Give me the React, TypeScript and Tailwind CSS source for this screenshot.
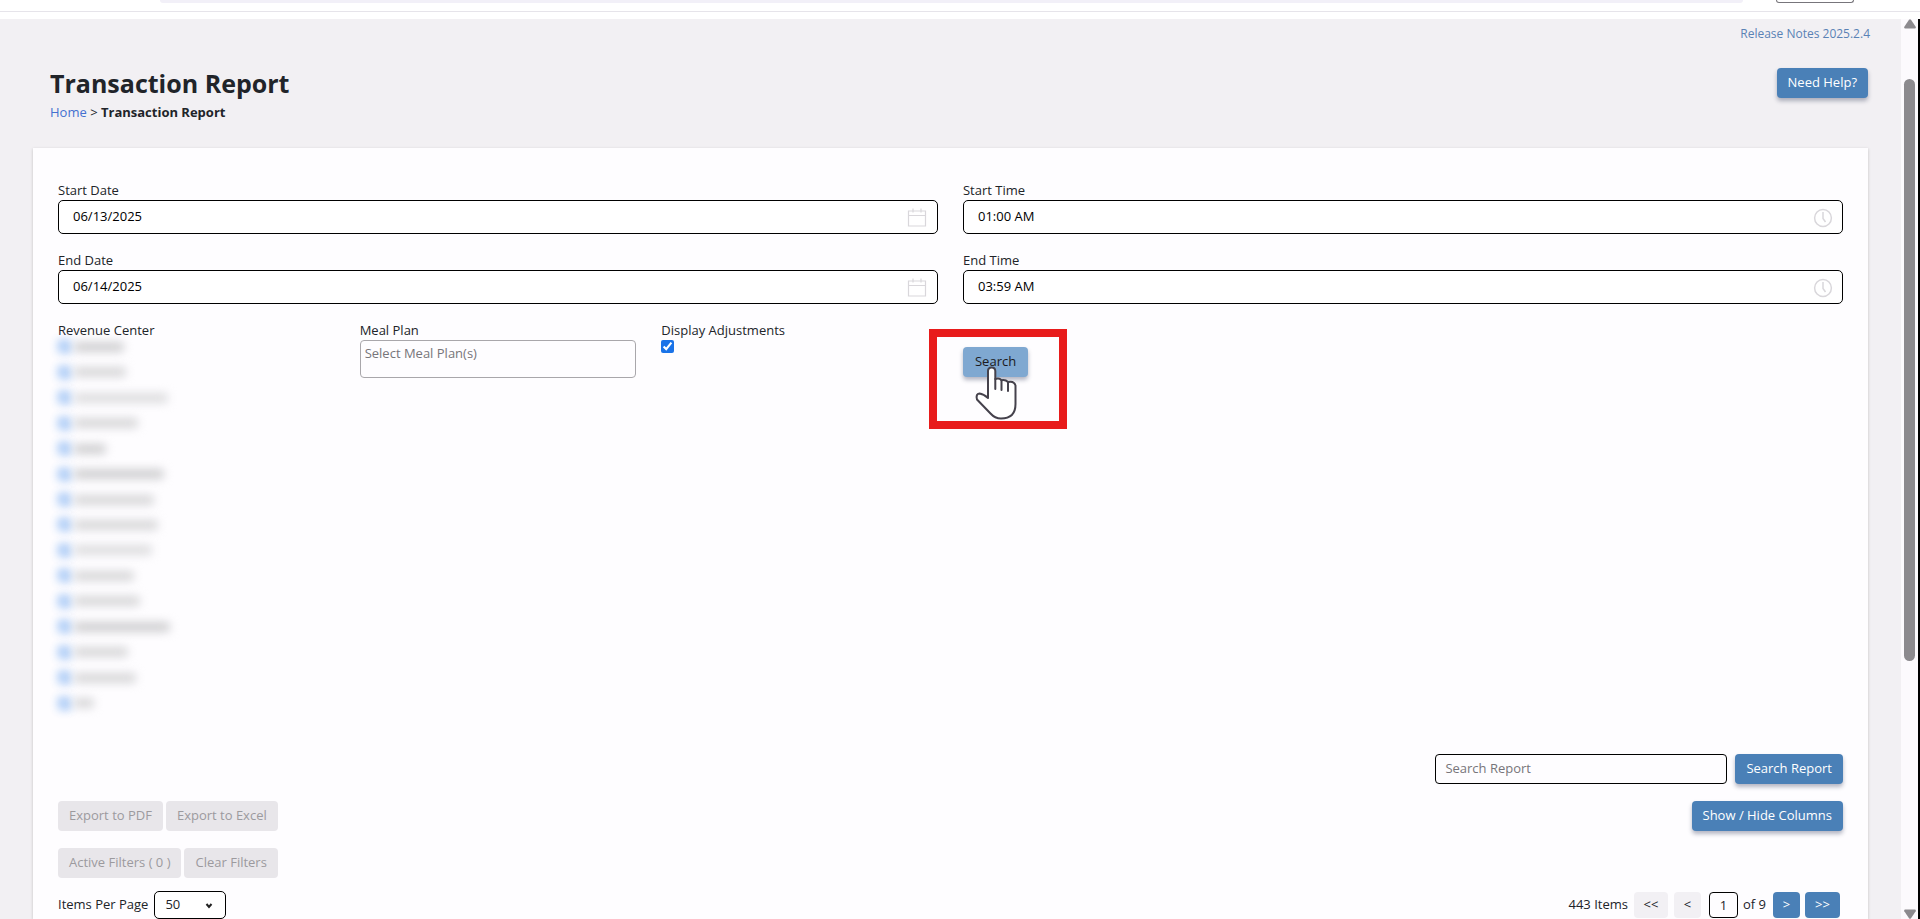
import { useState, type ComponentProps, type ReactNode } from "react";

type RevenueCenter = { id: number; bar: string };

const revenueCenters: RevenueCenter[] = [
  { id: 1, bar: "w-[50px] bg-[#cfcfd1]" },
  { id: 2, bar: "w-[52px] bg-[#d7d7d9]" },
  { id: 3, bar: "w-[94px] bg-[#dddddf]" },
  { id: 4, bar: "w-[64px] bg-[#d7d7d9]" },
  { id: 5, bar: "w-[32px] bg-[#cfcfd1]" },
  { id: 6, bar: "w-[90px] bg-[#cfcfd1]" },
  { id: 7, bar: "w-[80px] bg-[#d7d7d9]" },
  { id: 8, bar: "w-[84px] bg-[#d7d7d9]" },
  { id: 9, bar: "w-[78px] bg-[#dddddf]" },
  { id: 10, bar: "w-[60px] bg-[#d7d7d9]" },
  { id: 11, bar: "w-[66px] bg-[#d7d7d9]" },
  { id: 12, bar: "w-[96px] bg-[#cfcfd1]" },
  { id: 13, bar: "w-[54px] bg-[#d7d7d9]" },
  { id: 14, bar: "w-[62px] bg-[#d7d7d9]" },
  { id: 15, bar: "w-[20px] bg-[#d7d7d9]" },
];

function PrimaryButton({ children }: { children: ReactNode }) {
  return (
    <button className="h-[30px] rounded bg-[#4a80b7] px-[11px] pb-px text-white shadow-[0_3px_4px_rgba(40,50,80,0.35)]">
      {children}
    </button>
  );
}

function DisabledButton({ children }: { children: ReactNode }) {
  return (
    <button
      disabled
      className="h-[30px] rounded bg-[#e8e6ea] px-[11px] pb-px text-[#9c9a9e]"
    >
      {children}
    </button>
  );
}

function Field({
  id,
  label,
  value,
  icon,
}: {
  id: string;
  label: string;
  value: string;
  icon: ReactNode;
}) {
  return (
    <div className="col-span-3 flex flex-col">
      <label htmlFor={id} className="leading-[20px]">
        {label}
      </label>
      <div className="relative">
        <input
          id={id}
          defaultValue={value}
          className="block h-[34px] w-full rounded-[5px] border border-black bg-white px-[14px] pb-[2px] text-black"
        />
        <span className="absolute top-2 right-[10px] text-[#d9d7db]">{icon}</span>
      </div>
    </div>
  );
}

function CalendarIcon() {
  return (
    <svg
      viewBox="0 0 20 20"
      className="mr-px h-5 w-5"
      fill="none"
      stroke="currentColor"
      strokeWidth="1.2"
    >
      <path d="M1.5 3h17v15h-17zM1.5 7.500h17M6 .5v4M14 .5v4" />
    </svg>
  );
}

function ClockIcon() {
  return (
    <svg
      viewBox="0 0 20 20"
      className="h-5 w-5"
      fill="none"
      stroke="currentColor"
      strokeWidth="1.5"
    >
      <circle cx="10" cy="10" r="8.4" />
      <path d="M10 4v6.5l2.500 3.500" />
    </svg>
  );
}

function HandPointer(props: ComponentProps<"svg">) {
  return (
    <svg
      viewBox="0 0 42 54"
      fill="#fff"
      stroke="#45424c"
      strokeWidth="2"
      strokeLinejoin="round"
      strokeLinecap="round"
      {...props}
    >
      <path d="M13 32V5q0-3.500 3.600-3.500T20.300 5v8q4-1.500 6 1.200 4-1 6.700 1.800 6-1.500 7.500 3.500V38q0 14.500-14.500 14.500-6 0-10.500-5L2 33.500Q.5 28 4.500 27.500q4 .5 8.500 4.500z" />
      <path d="M20.300 13v10M26.500 14.500V24M33 16.500V25" fill="none" />
    </svg>
  );
}

function BrowserEdge() {
  return (
    <div className="flex h-[19px] shrink-0 flex-col bg-white">
      <div className="flex h-[11px] items-start pr-[66px] pl-[160px]">
        <div className="h-[3px] flex-1 rounded-b-lg bg-[#f2f0f8]" />
        <div className="ml-[33px] h-[3px] w-[78px] rounded-b-[12px] border border-t-0 border-[#77757b]" />
      </div>
      <div className="h-px bg-[#e6e4ea]" />
    </div>
  );
}

function ScrollRail() {
  return (
    <div
      aria-hidden
      className="flex w-[19px] shrink-0 flex-col items-center border-r-2 border-black bg-[#fcfafd]"
    >
      <svg viewBox="0 0 12 10" className="h-[10px] w-3" fill="#8c8a8e">
        <path d="M5 .8q1-1.200 2 0l4.700 7q.6 1.700-1 1.700H1.300q-1.600 0-1-1.700z" />
      </svg>
      <div className="mt-[50px] h-[582px] w-[11px] rounded-full bg-[#8c8a8e]" />
      <svg viewBox="0 0 12 10" className="mt-auto h-[10px] w-3" fill="#8c8a8e">
        <path d="M5 9.200q1 1.200 2 0l4.700-7q.6-1.700-1-1.700H1.300q-1.600 0-1 1.700z" />
      </svg>
    </div>
  );
}

function Filters() {
  return (
    <form
      className="grid grid-cols-6 gap-x-[25px] gap-y-4"
      onSubmit={(e) => e.preventDefault()}
    >
      <Field id="start-date" label="Start Date" value="06/13/2025" icon={<CalendarIcon />} />
      <Field id="start-time" label="Start Time" value="01:00 AM" icon={<ClockIcon />} />
      <Field id="end-date" label="End Date" value="06/14/2025" icon={<CalendarIcon />} />
      <Field id="end-time" label="End Time" value="03:59 AM" icon={<ClockIcon />} />

      <fieldset>
        <legend className="leading-[20px]">Revenue Center</legend>
        <div className="-mt-[6px] grid h-[382px] auto-rows-fr">
          {revenueCenters.map((c) => (
            <div key={c.id} className="flex items-center gap-[3px]">
              <input
                type="checkbox"
                defaultChecked
                aria-label={`Revenue center ${c.id}`}
                className="h-[13px] w-[13px] accent-[#1a73e8] opacity-45 blur-[4px]"
              />
              <span className={`h-[10px] rounded blur-[5px] ${c.bar}`} />
            </div>
          ))}
        </div>
      </fieldset>

      <div className="flex flex-col">
        <label htmlFor="meal-plan" className="leading-[20px]">
          Meal Plan
        </label>
        <input
          id="meal-plan"
          placeholder="Select Meal Plan(s)"
          className="h-[38px] w-full rounded border border-[#a9a7ab] px-1 pb-[12px] placeholder:text-[#77757a]"
        />
      </div>

      <div className="flex flex-col items-start">
        <label htmlFor="adjustments" className="leading-[20px]">
          Display Adjustments
        </label>
        <input
          id="adjustments"
          type="checkbox"
          defaultChecked
          className="h-[13px] w-[13px] accent-[#1a73e8]"
        />
      </div>

      <div className="pt-[27px]">
        <div className="relative w-fit">
          <button className="h-[30px] rounded bg-[#7fa8d1] px-3 pb-px text-[#1b1a20] shadow-[0_3px_4px_rgba(40,50,80,0.35)]">
            Search
          </button>
          <div className="pointer-events-none absolute -top-[18px] -left-[34px] h-[100px] w-[138px] border-8 border-[#e81b1b]" />
          <HandPointer className="pointer-events-none absolute top-[19px] left-3 h-[54px] w-[42px]" />
        </div>
      </div>
    </form>
  );
}

function Pager() {
  const [page, setPage] = useState("1");

  return (
    <nav className="flex items-center pr-[3px]" aria-label="Pagination">
      <span className="mr-[6px]">443 Items</span>
      <button className="mr-[6px] h-[26px] w-[34px] rounded bg-[#f2f0f4]">&lt;&lt;</button>
      <button className="mr-2 h-[26px] w-[27px] rounded bg-[#f2f0f4]">&lt;</button>
      <input
        aria-label="Page"
        value={page}
        onChange={(e) => setPage(e.target.value)}
        className="mr-[5px] h-[26px] w-[29px] rounded border border-black text-center"
      />
      <span className="mr-[7px]">of 9</span>
      <button className="mr-[5px] h-[26px] w-[27px] rounded bg-[#4a80b7] text-white">&gt;</button>
      <button className="h-[26px] w-[35px] rounded bg-[#4a80b7] text-white">&gt;&gt;</button>
    </nav>
  );
}

export default function App() {
  return (
    <div className="flex h-screen flex-col overflow-hidden bg-[#f2f0f3] font-['Open_Sans',sans-serif] text-[13px] text-[#212429]">
      <BrowserEdge />
      <div className="flex min-h-0 flex-1">
        <main className="flex min-w-0 flex-1 flex-col overflow-hidden px-[33px]">
          <div className="-mr-[2px] pt-1 text-right leading-[20px]">
            <a href="#" className="text-[12px] text-[#5a82b5]">
              Release Notes 2025.2.4
            </a>
          </div>

          <header className="flex h-[104px] shrink-0 justify-between pt-6 pl-[17px]">
            <div>
              <h1 className="text-[25px] leading-[30px] font-bold">Transaction Report</h1>
              <p className="mt-1 leading-[20px]">
                <a href="#" className="text-[#4470d0]">
                  Home
                </a>{" "}
                &gt; <strong>Transaction Report</strong>
              </p>
            </div>
            <PrimaryButton>Need Help?</PrimaryButton>
          </header>

          <section className="flex-1 bg-[#fefdff] px-[25px] pt-8 shadow-[0_1px_3px_rgba(0,0,0,0.2)]">
            <Filters />

            <div className="mt-[38px] flex justify-end gap-2">
              <input
                aria-label="Search Report"
                placeholder="Search Report"
                className="h-[30px] w-[292px] rounded border border-black px-[9px] pb-[3px] placeholder:text-[#77757a]"
              />
              <PrimaryButton>Search Report</PrimaryButton>
            </div>

            <div className="mt-[17px] flex justify-between">
              <div className="flex gap-[3px]">
                <DisabledButton>Export to PDF</DisabledButton>
                <DisabledButton>Export to Excel</DisabledButton>
              </div>
              <PrimaryButton>Show / Hide Columns</PrimaryButton>
            </div>

            <div className="mt-[17px] flex gap-[3px]">
              <DisabledButton>Active Filters ( 0 )</DisabledButton>
              <DisabledButton>Clear Filters</DisabledButton>
            </div>

            <div className="mt-[13px] flex items-center justify-between">
              <div className="flex items-center gap-[6px]">
                <label htmlFor="per-page">Items Per Page</label>
                <div className="relative">
                  <select
                    id="per-page"
                    defaultValue="50"
                    className="h-7 w-[72px] appearance-none rounded-[5px] border border-black bg-white pl-[10px]"
                  >
                    <option>25</option>
                    <option>50</option>
                    <option>100</option>
                  </select>
                  <svg
                    viewBox="0 0 8 6"
                    className="pointer-events-none absolute top-3 right-[13px] h-[6px] w-2"
                    fill="none"
                    stroke="#222"
                    strokeWidth="2"
                  >
                    <path d="M1.500 1l2.500 3 2.500-3" />
                  </svg>
                </div>
              </div>
              <Pager />
            </div>
          </section>
        </main>
        <ScrollRail />
      </div>
    </div>
  );
}
